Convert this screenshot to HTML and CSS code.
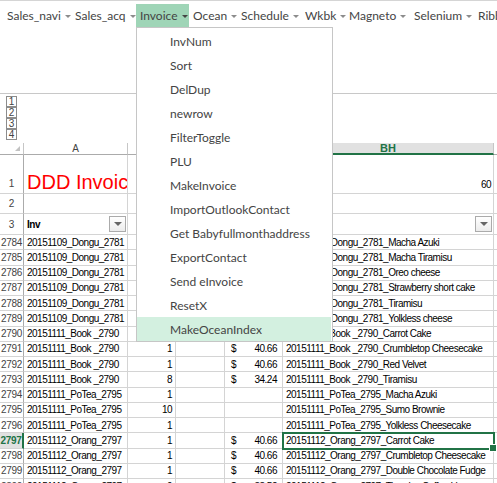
FILE: index.html
```html
<!DOCTYPE html>
<html>
<head>
<meta charset="utf-8">
<link rel="stylesheet" href="styles.css">
</head>
<body>
<div class="menubar">
  <div class="mi w1">Sales_navi<span class="arr"></span></div>
  <div class="mi w2">Sales_acq<span class="arr"></span></div>
  <div class="mi w3 active">Invoice<span class="arr dark"></span></div>
  <div class="mi w4">Ocean<span class="arr"></span></div>
  <div class="mi w5">Schedule<span class="arr"></span></div>
  <div class="mi w6">Wkbk<span class="arr"></span></div>
  <div class="mi w7">Magneto<span class="arr"></span></div>
  <div class="mi w8">Selenium<span class="arr"></span></div>
  <div class="mi w9">Ribbon<span class="arr"></span></div>
</div>
<div class="spacer"></div>
<div class="outline">
  <span class="olb">1</span>
  <span class="olb">2</span>
  <span class="olb">3</span>
  <span class="olb">4</span>
</div>
<div class="sheet">
  <div class="row colhead">
    <div class="c rh corner"><span class="tri"></span></div>
    <div class="c ca hc">A</div>
    <div class="c cb hc"></div>
    <div class="c cc hc"></div>
    <div class="c cd hc"></div>
    <div class="c cbh hc hsel">BH</div>
    <div class="c cbi"></div>
  </div>
  <div class="row r1">
    <div class="c rh">1</div>
    <div class="c ca title">DDD Invoice</div>
    <div class="c cb"></div>
    <div class="c cc"></div>
    <div class="c cd"></div>
    <div class="c cbh num">60</div>
    <div class="c cbi"></div>
  </div>
  <div class="row r2">
    <div class="c rh">2</div>
    <div class="c ca"></div>
    <div class="c cb"></div>
    <div class="c cc"></div>
    <div class="c cd"></div>
    <div class="c cbh"></div>
    <div class="c cbi"></div>
  </div>
  <div class="row r3">
    <div class="c rh">3</div>
    <div class="c ca"><b class="hdr">Inv</b><span class="fbtn"><span class="ftri"></span></span></div>
    <div class="c cb"></div>
    <div class="c cc"></div>
    <div class="c cd"></div>
    <div class="c cbh"><span class="fbtn"><span class="ftri"></span></span></div>
    <div class="c cbi"></div>
  </div>

  <div class="row"><div class="c rh">2784</div><div class="c ca">20151109_Dongu_2781</div><div class="c cb"></div><div class="c cc"></div><div class="c cd"></div><div class="c cbh">20151109_Dongu_2781_Macha Azuki</div><div class="c cbi"></div></div>
  <div class="row"><div class="c rh">2785</div><div class="c ca">20151109_Dongu_2781</div><div class="c cb"></div><div class="c cc"></div><div class="c cd"></div><div class="c cbh">20151109_Dongu_2781_Macha Tiramisu</div><div class="c cbi"></div></div>
  <div class="row"><div class="c rh">2786</div><div class="c ca">20151109_Dongu_2781</div><div class="c cb"></div><div class="c cc"></div><div class="c cd"></div><div class="c cbh">20151109_Dongu_2781_Oreo cheese</div><div class="c cbi"></div></div>
  <div class="row"><div class="c rh">2787</div><div class="c ca">20151109_Dongu_2781</div><div class="c cb"></div><div class="c cc"></div><div class="c cd"></div><div class="c cbh">20151109_Dongu_2781_Strawberry short cake</div><div class="c cbi"></div></div>
  <div class="row"><div class="c rh">2788</div><div class="c ca">20151109_Dongu_2781</div><div class="c cb"></div><div class="c cc"></div><div class="c cd"></div><div class="c cbh">20151109_Dongu_2781_Tiramisu</div><div class="c cbi"></div></div>
  <div class="row"><div class="c rh">2789</div><div class="c ca">20151109_Dongu_2781</div><div class="c cb"></div><div class="c cc"></div><div class="c cd"></div><div class="c cbh">20151109_Dongu_2781_Yolkless cheese</div><div class="c cbi"></div></div>
  <div class="row"><div class="c rh">2790</div><div class="c ca">20151111_Book _2790</div><div class="c cb"></div><div class="c cc"></div><div class="c cd"></div><div class="c cbh">20151111_Book _2790_Carrot Cake</div><div class="c cbi"></div></div>
  <div class="row"><div class="c rh">2791</div><div class="c ca">20151111_Book _2790</div><div class="c cb">1</div><div class="c cc"></div><div class="c cd"><span>$</span><span>40.66</span></div><div class="c cbh">20151111_Book _2790_Crumbletop Cheesecake</div><div class="c cbi"></div></div>
  <div class="row"><div class="c rh">2792</div><div class="c ca">20151111_Book _2790</div><div class="c cb">1</div><div class="c cc"></div><div class="c cd"><span>$</span><span>40.66</span></div><div class="c cbh">20151111_Book _2790_Red Velvet</div><div class="c cbi"></div></div>
  <div class="row"><div class="c rh">2793</div><div class="c ca">20151111_Book _2790</div><div class="c cb">8</div><div class="c cc"></div><div class="c cd"><span>$</span><span>34.24</span></div><div class="c cbh">20151111_Book _2790_Tiramisu</div><div class="c cbi"></div></div>
  <div class="row"><div class="c rh">2794</div><div class="c ca">20151111_PoTea_2795</div><div class="c cb">1</div><div class="c cc"></div><div class="c cd"></div><div class="c cbh">20151111_PoTea_2795_Macha Azuki</div><div class="c cbi"></div></div>
  <div class="row"><div class="c rh">2795</div><div class="c ca">20151111_PoTea_2795</div><div class="c cb">10</div><div class="c cc"></div><div class="c cd"></div><div class="c cbh">20151111_PoTea_2795_Sumo Brownie</div><div class="c cbi"></div></div>
  <div class="row"><div class="c rh">2796</div><div class="c ca">20151111_PoTea_2795</div><div class="c cb">1</div><div class="c cc"></div><div class="c cd"></div><div class="c cbh">20151111_PoTea_2795_Yolkless Cheesecake</div><div class="c cbi"></div></div>
  <div class="row"><div class="c rh rsel">2797</div><div class="c ca">20151112_Orang_2797</div><div class="c cb">1</div><div class="c cc"></div><div class="c cd"><span>$</span><span>40.66</span></div><div class="c cbh sel">20151112_Orang_2797_Carrot Cake</div><div class="c cbi"></div></div>
  <div class="row"><div class="c rh">2798</div><div class="c ca">20151112_Orang_2797</div><div class="c cb">1</div><div class="c cc"></div><div class="c cd"><span>$</span><span>40.66</span></div><div class="c cbh">20151112_Orang_2797_Crumbletop Cheesecake</div><div class="c cbi"></div></div>
  <div class="row"><div class="c rh">2799</div><div class="c ca">20151112_Orang_2797</div><div class="c cb">1</div><div class="c cc"></div><div class="c cd"><span>$</span><span>40.66</span></div><div class="c cbh">20151112_Orang_2797_Double Chocolate Fudge</div><div class="c cbi"></div></div>
  <div class="row"><div class="c rh">2800</div><div class="c ca">20151112_Orang_2797</div><div class="c cb">9</div><div class="c cc"></div><div class="c cd"><span>$</span><span>38.52</span></div><div class="c cbh">20151112_Orang_2797_Tiramisu Coffee Liquor</div><div class="c cbi"></div></div>
</div>

<div class="dropdown">
  <div class="dd">InvNum</div>
  <div class="dd">Sort</div>
  <div class="dd">DelDup</div>
  <div class="dd">newrow</div>
  <div class="dd">FilterToggle</div>
  <div class="dd">PLU</div>
  <div class="dd">MakeInvoice</div>
  <div class="dd">ImportOutlookContact</div>
  <div class="dd">Get Babyfullmonthaddress</div>
  <div class="dd">ExportContact</div>
  <div class="dd">Send eInvoice</div>
  <div class="dd">ResetX</div>
  <div class="dd hl">MakeOceanIndex</div>
</div>
</body>
</html>
```

FILE: styles.css
```css
* { box-sizing: border-box; margin: 0; padding: 0; }
html, body { width: 497px; height: 483px; overflow: hidden; background: #fff; }
body {
  position: relative;
  font-family: "Liberation Sans", Arial, sans-serif;
  font-size: 10px;
  letter-spacing: -0.5px;
  color: #000;
}

/* menu bar */
.menubar {
  height: 27px;
  border-top: 1px solid #d5d5d5;
  padding: 3px 0 0 3px;
  display: flex;
  font-family: Lato, "Open Sans", sans-serif;
  font-size: 12px;
  letter-spacing: 0;
  color: #444;
  white-space: nowrap;
  overflow: hidden;
}
.mi { flex: none; height: 23px; display: flex; align-items: center; padding-left: 4px; }
.mi.active { background: #9fd5b7; }
.arr {
  width: 0; height: 0;
  border-left: 3px solid transparent;
  border-right: 3px solid transparent;
  border-top: 3px solid #8c8c8c;
  margin-left: 4px;
  margin-top: 1px;
}
.arr.dark { border-top-color: #444; }
.w1 { width: 68px; }
.w2 { width: 65px; }
.w3 { width: 53px; }
.w4 { width: 48px; }
.w5 { width: 64px; }
.w6 { width: 44px; }
.w7 { width: 65px; }
.w8 { width: 64px; }
.w9 { width: 60px; }

.spacer { height: 66px; }

/* outline level buttons */
.outline {
  height: 50px;
  border-top: 1px solid #c8c8c8;
  padding: 2px 0 0 6px;
}
.olb {
  display: block;
  width: 11px;
  height: 11px;
  border: 1px solid #8c8c8c;
  font-size: 10px;
  letter-spacing: 0;
  line-height: 9px;
  text-align: center;
  color: #444;
}

/* sheet */
.row { display: flex; height: 15.25px; }
.c {
  flex: none;
  display: flex;
  align-items: center;
  border-right: 1px solid #d4d4d4;
  border-bottom: 1px solid #d4d4d4;
  padding: 0 3px;
  line-height: 13px;
  white-space: nowrap;
  overflow: hidden;
}
.rh { width: 24px; padding: 0; justify-content: center; color: #444; border-right-color: #ababab; letter-spacing: -0.3px; }
.ca { width: 104px; }
.cb { width: 48px; justify-content: flex-end; }
.cc { width: 49px; }
.cd { width: 58px; justify-content: space-between; padding: 0 5px 0 6px; }
.cbh { width: 211px; }
.cbi { flex: 1; border-right: none; }

.colhead { height: 12px; }
.colhead .c { border-bottom-color: #ababab; border-right-color: #c6c6c6; justify-content: center; color: #444; letter-spacing: 0; }
.corner { position: relative; }
.tri {
  position: absolute; right: 3px; bottom: 3px;
  width: 0; height: 0;
  border-left: 5px solid transparent;
  border-bottom: 5px solid #c2c2c2;
}
.hsel { background: #e1e1e1; color: #217346 !important; font-weight: bold; font-size: 11px; border-bottom: 2px solid #217346 !important; }

.r1 { height: 39px; }
.r2 { height: 20px; }
.r3 { height: 21px; }
.r1 .c, .r2 .c, .r3 .c { align-items: flex-end; padding-bottom: 1px; }
.r1 .rh, .r2 .rh, .r3 .rh { padding-bottom: 3px; }
.title { color: #ff0000; font-size: 20px; letter-spacing: 0; line-height: 20px; padding-left: 3px; }
.num { justify-content: flex-end; padding-right: 2px; padding-bottom: 2px !important; }
.hdr { font-weight: bold; padding-bottom: 2px; }
.r3 .cbh { justify-content: flex-end; }
.fbtn {
  align-self: flex-start;
  margin: 2px -2px 0 auto;
  width: 17px;
  height: 16px;
  border: 1px solid #ababab;
  background: linear-gradient(#ffffff, #ececec);
  display: flex;
  align-items: center;
  justify-content: center;
  flex: none;
}
.ftri {
  width: 0; height: 0;
  border-left: 4px solid transparent;
  border-right: 4px solid transparent;
  border-top: 4px solid #666;
}

.rsel { background: #e1e1e1; color: #217346; font-weight: bold; border-right: 2px solid #217346; }
.sel {
  position: relative;
  overflow: visible;
  outline: 2px solid #217346;
  outline-offset: -1px;
}
.sel::after {
  content: "";
  position: absolute;
  right: -4px;
  bottom: -4px;
  width: 6px;
  height: 6px;
  background: #217346;
  border: 1px solid #fff;
}

/* dropdown menu */
.dropdown {
  position: absolute;
  left: 136px;
  top: 27px;
  width: 197px;
  border: 1px solid #c6c6c6;
  padding-top: 1px;
  background: #fff;
  font-family: Lato, "Open Sans", sans-serif;
  font-size: 12px;
  letter-spacing: 0;
  color: #444;
}
.dd { height: 24px; display: flex; align-items: center; padding-left: 33px; white-space: nowrap; }
.dd.hl { background: #d3f0e0; margin-right: 1px; }
```
